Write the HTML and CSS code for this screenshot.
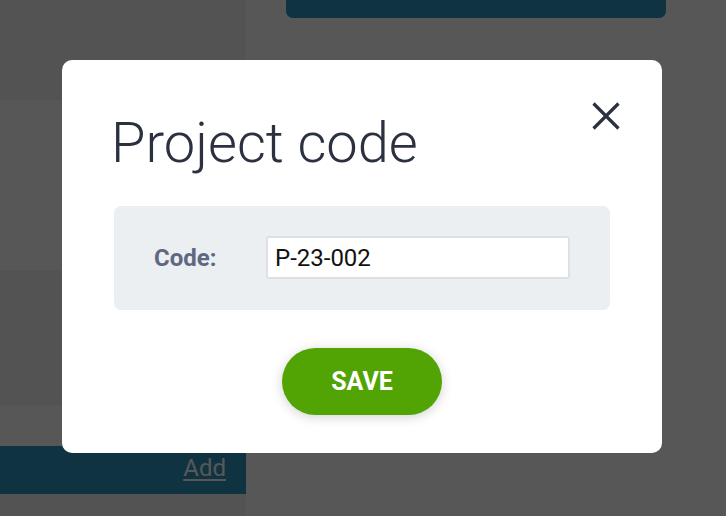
FILE: index.html
```html
<!DOCTYPE html>
<html lang="en">
<head>
<meta charset="utf-8">
<title>Project code</title>
<link rel="stylesheet" href="styles.css">
</head>
<body>
<div class="app">
  <aside class="sidebar">
    <div class="row row-a"></div>
    <div class="row row-b"></div>
    <div class="row row-c"></div>
    <div class="row row-d"></div>
    <div class="addbar"><a class="add-link" href="#">Add</a></div>
  </aside>
  <main class="main">
    <div class="top-button"></div>
  </main>
</div>

<div class="overlay">
  <div class="modal">
    <button class="close" aria-label="Close">
      <svg width="28" height="28" viewBox="0 0 28 28"><path d="M1.5 1.5 L26.5 26.5 M26.5 1.5 L1.5 26.5" stroke="#2c3140" stroke-width="3.2" fill="none"/></svg>
    </button>
    <h1 class="title">Project code</h1>
    <div class="field-box">
      <label class="label" for="code">Code:</label>
      <input class="input" id="code" type="text" value="P-23-002">
    </div>
    <div class="actions">
      <button class="save">SAVE</button>
    </div>
  </div>
</div>
</body>
</html>
```

FILE: styles.css
```css
* { box-sizing: border-box; }
html, body { margin: 0; padding: 0; }
body {
  width: 726px;
  height: 516px;
  overflow: hidden;
  font-family: Roboto, "Liberation Sans", sans-serif;
  background: #ffffff;
}
.app {
  display: flex;
  height: 516px;
}
.sidebar {
  width: 246px;
  flex: 0 0 246px;
  background: #f1f4f1;
  display: flex;
  flex-direction: column;
}
.row-a { height: 100px; }
.row-b { height: 170px; background: #ffffff; }
.row-c { height: 135px; }
.row-d { height: 41px; background: #ffffff; }
.addbar {
  height: 48px;
  background: #2c96bc;
  display: flex;
  justify-content: flex-end;
  align-items: center;
  padding: 0 20px 4px 0;
}
.add-link {
  color: #ffffff;
  font-size: 24px;
  line-height: 28px;
  text-decoration: underline;
  text-underline-offset: 3px;
}
.main {
  flex: 1;
  background: #ffffff;
}
.top-button {
  margin-left: 40px;
  width: 380px;
  height: 18px;
  background: #2c96bc;
  border-radius: 0 0 7px 7px;
}
.overlay {
  position: fixed;
  inset: 0;
  background: rgba(0, 0, 0, 0.66);
  display: flex;
  align-items: flex-start;
  justify-content: flex-start;
  padding: 60px 0 0 62px;
}
.modal {
  position: relative;
  width: 600px;
  background: #ffffff;
  border-radius: 10px;
  padding: 55px 52px 38px 52px;
}
.close {
  position: absolute;
  top: 42px;
  right: 42px;
  width: 28px;
  height: 28px;
  padding: 0;
  border: 0;
  background: none;
  display: block;
}
.close svg { display: block; }
.title {
  margin: 0 0 35px -3px;
  font-size: 56px;
  line-height: 56px;
  font-weight: 300;
  color: #2c3140;
}
.field-box {
  background: #eceff2;
  border-radius: 7px;
  padding: 30px 40px 31px 40px;
  display: flex;
  align-items: center;
}
.label {
  width: 112px;
  flex: 0 0 112px;
  font-size: 24px;
  font-weight: 700;
  color: #5f6781;
}
.input {
  flex: 1 1 0;
  min-width: 0;
  width: 304px;
  height: 43px;
  border: 2px solid #dde0e7;
  border-radius: 3px;
  background: #ffffff;
  padding: 0 7px;
  font-family: Roboto, "Liberation Sans", sans-serif;
  font-size: 24px;
  color: #111111;
  outline: none;
}
.actions {
  display: flex;
  justify-content: center;
  margin-top: 38px;
}
.save {
  width: 160px;
  height: 67px;
  border: 0;
  border-radius: 34px;
  background: #52a304;
  color: #ffffff;
  font-family: Roboto, "Liberation Sans", sans-serif;
  font-size: 25px;
  font-weight: 700;
  box-shadow: 0 2px 12px rgba(0, 0, 0, 0.18);
}
```
